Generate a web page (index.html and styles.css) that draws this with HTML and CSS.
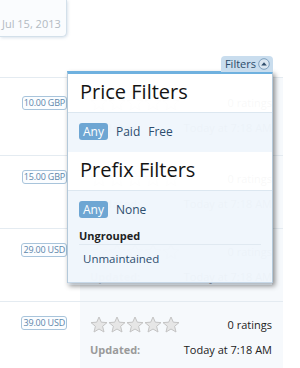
FILE: index.html
```html
<!DOCTYPE html>
<html lang="en">
<head>
  <meta charset="UTF-8" />
  <title>Resources</title>
  <link rel="stylesheet" href="styles.css">
</head>
<body>
  <div class="page">
    <div class="dateBox">Jul 15, 2013</div>

    <div class="list">
      <div class="listHead"></div>

      <div class="row first">
        <div class="priceCol"><span class="price">10.00 GBP</span></div>
        <div class="infoCol">
          <div class="line"><span class="stars"></span><span class="count">0 ratings</span></div>
          <div class="line"><span class="muted">Updated:</span><span class="count">Today at 7:18 AM</span></div>
        </div>
      </div>

      <div class="row">
        <div class="priceCol"><span class="price">15.00 GBP</span></div>
        <div class="infoCol">
          <div class="line"><span class="stars"></span><span class="count">0 ratings</span></div>
          <div class="line"><span class="muted">Updated:</span><span class="count">Today at 7:18 AM</span></div>
        </div>
      </div>

      <div class="row">
        <div class="priceCol"><span class="price">29.00 USD</span></div>
        <div class="infoCol">
          <div class="line"><span class="stars"></span><span class="count">0 ratings</span></div>
          <div class="line"><span class="muted">Updated:</span><span class="count">Today at 7:18 AM</span></div>
        </div>
      </div>

      <div class="row">
        <div class="priceCol"><span class="price">39.00 USD</span></div>
        <div class="infoCol">
          <div class="line"><span class="stars"></span><span class="count">0 ratings</span></div>
          <div class="line"><span class="muted">Updated:</span><span class="count">Today at 7:18 AM</span></div>
        </div>
      </div>
    </div>

    <div class="popup">
      <div class="popupTab">Filters
        <svg class="tabIcon" width="12" height="12" viewBox="0 0 12 12">
          <circle cx="6" cy="6" r="5.3" fill="#dbe7f1" stroke="#7d9fbd" stroke-width="1"/>
          <path d="M3.2 7.4 L6 4.3 L8.8 7.4 Z" fill="#2f4d6b"/>
        </svg>
      </div>

      <h3 class="popupHead">Price Filters</h3>
      <div class="band">
        <div class="choices">
          <a class="choice selected">Any</a>
          <a class="choice">Paid</a>
          <a class="choice">Free</a>
        </div>
      </div>

      <h3 class="popupHead">Prefix Filters</h3>
      <div class="band last">
        <div class="choices">
          <a class="choice selected">Any</a>
          <a class="choice">None</a>
        </div>
        <div class="groupTitle">Ungrouped</div>
        <div class="groupItems">
          <a class="choice">Unmaintained</a>
        </div>
      </div>
    </div>
  </div>

  <script>
    // five empty rating stars per row
    const star = '<svg width="18" height="17" viewBox="0 0 18 17"><path d="M9 1 L11.3 6.2 L17 6.6 L12.6 10.3 L14 16 L9 13 L4 16 L5.4 10.3 L1 6.6 L6.7 6.2 Z" fill="#e6e6e6" stroke="#c4c4c4" stroke-width="1"/></svg>';
    document.querySelectorAll(".stars").forEach(el => {
      el.innerHTML = star.repeat(5);
    });
  </script>
</body>
</html>
```

FILE: styles.css
```css
body {
  margin: 0;
  background-color: white;
  font-family: "Open Sans", "DejaVu Sans", sans-serif;
  color: #222;
  overflow: hidden;
}
.page {
  position: relative;
  width: 300px;
  height: 368px;
}
.dateBox {
  box-sizing: border-box;
  width: 67px;
  height: 37px;
  padding: 16px 0 0 2px;
  background-color: #fafcfe;
  border: 1px solid #d3e0ea;
  border-top: none;
  border-left: none;
  border-bottom-right-radius: 5px;
  box-shadow: 1px 1px 3px rgba(150, 175, 200, 0.35);
  color: #b2bac2;
  font-size: 11px;
  white-space: nowrap;
}
.list {
  width: 283px;
  margin-top: 40px;
}
.listHead {
  height: 0;
  border-bottom: 1px solid #e4ebf1;
}
.row {
  box-sizing: border-box;
  display: flex;
  height: 73px;
  border-bottom: 1px solid #e4ebf1;
}
.row.first {
  height: 78px;
  padding-top: 4px;
}
.row.first .infoCol {
  margin-top: -4px;
  padding-top: 14px;
}
.priceCol {
  width: 67px;
  padding-right: 13px;
  padding-top: 14px;
  display: flex;
  justify-content: flex-end;
  align-items: flex-start;
}
.price {
  font-size: 9px;
  letter-spacing: -0.2px;
  color: #5d86aa;
  border: 1px solid #a8c4db;
  border-radius: 3px;
  padding: 0 1px;
  line-height: 12px;
  background-color: #fbfdff;
  white-space: nowrap;
}
.infoCol {
  flex: 1;
  background-color: #f6f9fc;
  padding: 12px 11px 0 10px;
}
.line {
  display: flex;
  justify-content: space-between;
  align-items: center;
  height: 20px;
  margin-bottom: 5px;
  font-size: 11px;
}
.stars {
  display: flex;
}
.stars svg {
  display: block;
}
.count {
  color: #222;
}
.muted {
  color: #9a9a9a;
  font-weight: bold;
}
.popup {
  position: absolute;
  left: 67px;
  top: 71px;
  box-sizing: border-box;
  width: 206px;
  height: 212px;
  background-color: rgba(255, 255, 255, 0.97);
  border: 1px solid #b4c9da;
  border-top: 3px solid #6fb1df;
  box-shadow: 2px 3px 5px rgba(0, 0, 0, 0.45);
}
.popupTab {
  position: absolute;
  right: -1px;
  top: -18px;
  height: 16px;
  padding: 0 3px 0 4px;
  background-color: #c9ddee;
  border-radius: 4px 4px 0 0;
  color: #2b4b6a;
  font-size: 11px;
  line-height: 16px;
  display: flex;
  align-items: center;
  gap: 2px;
}
.tabIcon {
  display: block;
}
.popupHead {
  margin: 0;
  height: 38px;
  padding-left: 12px;
  font-size: 20px;
  font-weight: normal;
  line-height: 36px;
  color: #141414;
}
.band {
  background-color: rgba(222, 236, 248, 0.45);
  border-top: 1px solid #dce7f0;
  height: 39px;
}
.band.last {
  height: auto;
  min-height: 94px;
}
.choices {
  display: flex;
  align-items: flex-start;
  gap: 8px;
  padding: 10px 11px 0;
}
.choice {
  display: block;
  font-size: 12px;
  color: #2d4d6e;
  padding: 1px 0;
  line-height: 15px;
}
.choice.selected {
  background-color: #6ea6d3;
  color: white;
  border-radius: 3px;
  padding: 1px 4px;
}
.groupTitle {
  margin: 10px 11px 0;
  height: 16px;
  line-height: 15px;
  border-bottom: 1px solid #e0e9f1;
  font-size: 11px;
  font-weight: bold;
  color: #1f1f1f;
}
.groupItems {
  padding: 5px 15px 0;
}
.groupItems .choice {
  font-size: 11.5px;
}
```
